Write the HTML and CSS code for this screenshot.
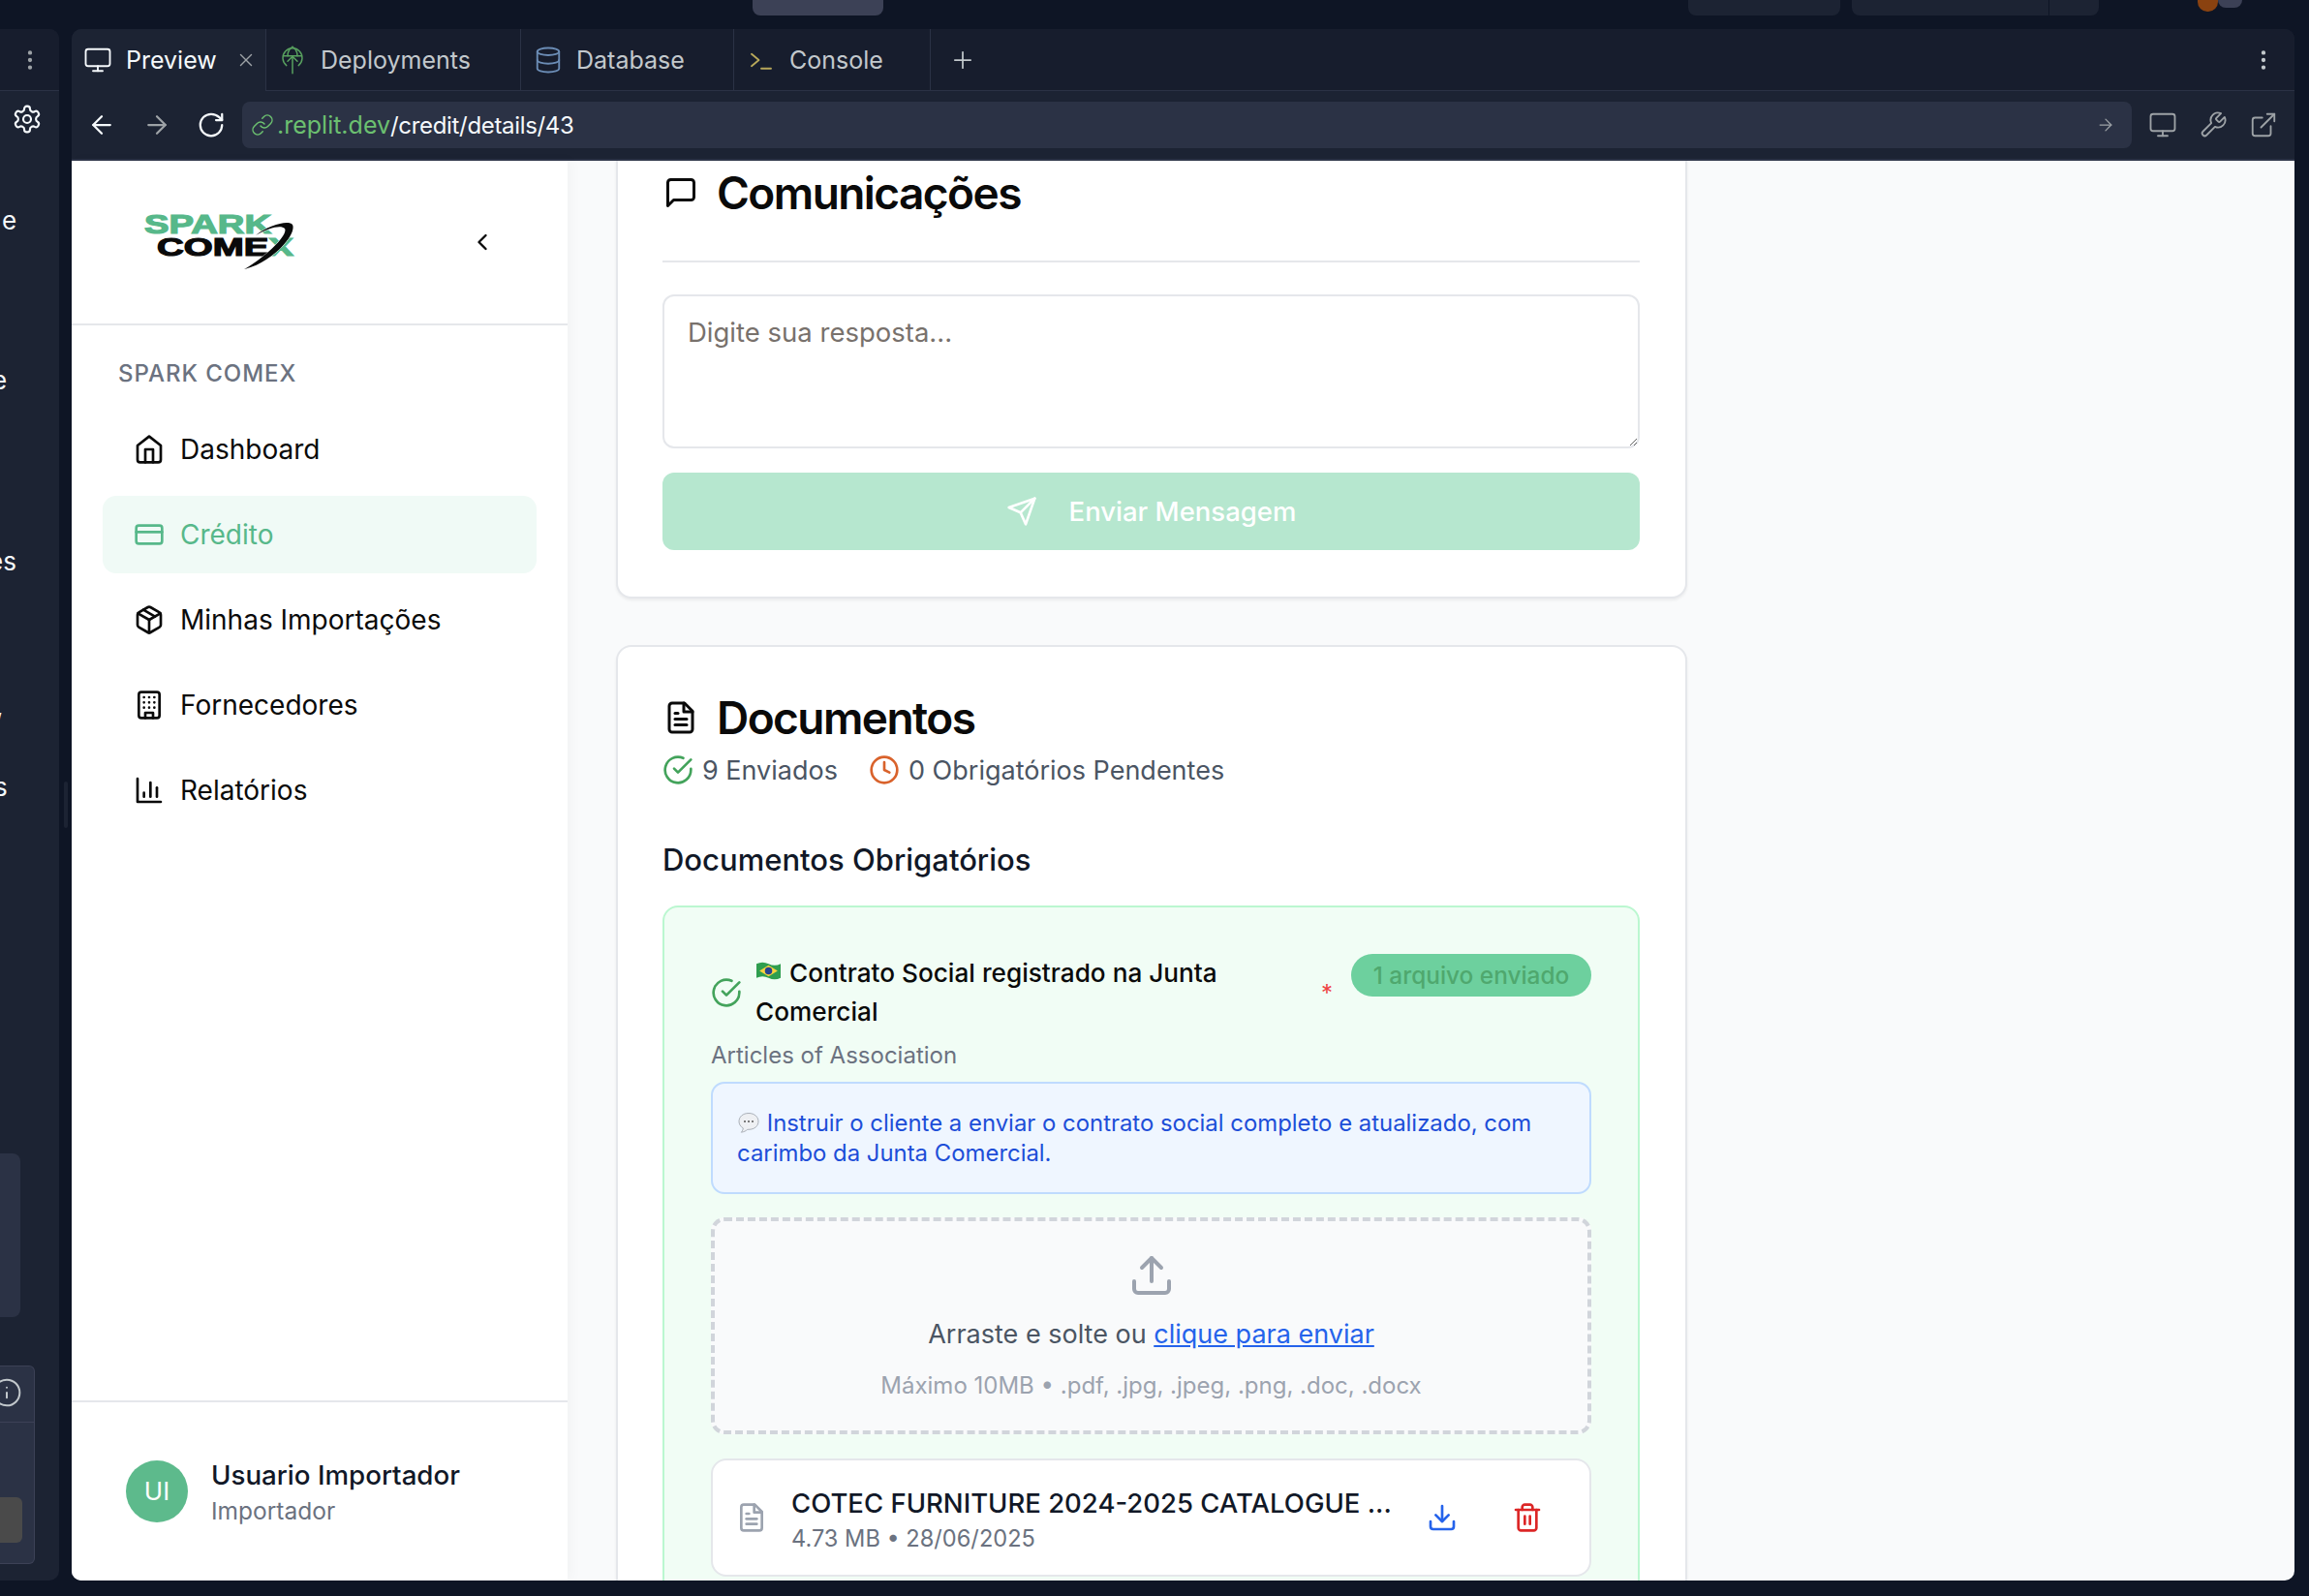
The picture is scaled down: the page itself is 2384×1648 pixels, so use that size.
FILE: index.html
```html
<!DOCTYPE html>
<html lang="pt-BR">
<head>
<meta charset="UTF-8">
<title>Spark Comex - Crédito</title>
<link rel="stylesheet" href="styles.css">
</head>
<body>
<!-- editor top strip -->
<header class="topstrip">
  <div class="pill pill-center"></div>
  <div class="pill pill-a"></div>
  <div class="pill pill-b"><span class="pill-split"></span></div>
  <div class="top-avatar"><span class="pin"></span><span class="face"></span></div>
</header>

<div class="workspace">
  <!-- left file rail, mostly cut off -->
  <aside class="rail">
    <div class="rail-head">
      <svg class="ic ic-dots" viewBox="0 0 24 24"><circle cx="12" cy="5" r="1"/><circle cx="12" cy="12" r="1"/><circle cx="12" cy="19" r="1"/></svg>
    </div>
    <div class="rail-body">
      <svg class="ic ic-gear" viewBox="0 0 24 24"><path d="M12.22 2h-.44a2 2 0 0 0-2 2v.18a2 2 0 0 1-1 1.73l-.43.25a2 2 0 0 1-2 0l-.15-.08a2 2 0 0 0-2.73.73l-.22.38a2 2 0 0 0 .73 2.73l.15.1a2 2 0 0 1 1 1.72v.51a2 2 0 0 1-1 1.74l-.15.09a2 2 0 0 0-.73 2.73l.22.38a2 2 0 0 0 2.73.73l.15-.08a2 2 0 0 1 2 0l.43.25a2 2 0 0 1 1 1.73V20a2 2 0 0 0 2 2h.44a2 2 0 0 0 2-2v-.18a2 2 0 0 1 1-1.73l.43-.25a2 2 0 0 1 2 0l.15.08a2 2 0 0 0 2.73-.73l.22-.39a2 2 0 0 0-.73-2.73l-.15-.08a2 2 0 0 1-1-1.74v-.5a2 2 0 0 1 1-1.74l.15-.09a2 2 0 0 0 .73-2.73l-.22-.38a2 2 0 0 0-2.73-.73l-.15.08a2 2 0 0 1-2 0l-.43-.25a2 2 0 0 1-1-1.73V4a2 2 0 0 0-2-2z"/><circle cx="12" cy="12" r="3"/></svg>
      <span class="frag frag-1">e</span>
      <span class="frag frag-2">e</span>
      <span class="frag frag-3">es</span>
      <span class="frag frag-4">,</span>
      <span class="frag frag-5">s</span>
      <div class="rail-box"></div>
      <div class="rail-panel">
        <div class="rail-panel-top">
          <svg class="ic ic-info" viewBox="0 0 24 24"><circle cx="12" cy="12" r="10"/><path d="M12 16v-4"/><path d="M12 8h.01"/></svg>
        </div>
        <div class="rail-panel-btn"></div>
      </div>
    </div>
  </aside>
  <div class="gutter"><span class="gutter-thumb"></span></div>

  <main class="pane">
    <nav class="tabs">
      <div class="tab tab-preview">
        <svg class="ic ic-tab light" viewBox="0 0 24 24"><rect x="2" y="3" width="20" height="14" rx="2"/><path d="M8 21h8"/><path d="M12 17v4"/></svg>
        <span class="tab-on">Preview</span>
        <svg class="ic ic-x" viewBox="0 0 24 24"><path d="M18 6 6 18"/><path d="m6 6 12 12"/></svg>
      </div>
      <div class="tab tab-deploy">
        <svg class="ic ic-tab ic-globe green" viewBox="0 0 24 24"><path d="M12 23V9"/><path d="m8 13 4-4 4 4"/><path d="M7 16.500a8 8 0 1 1 10 0"/><path d="M4.500 8.500h15"/><path d="M12 1c-3 2-4 4.500-4 7.500M12 1c3 2 4 4.500 4 7.500"/></svg>
        <span>Deployments</span>
      </div>
      <div class="tab tab-db">
        <svg class="ic ic-tab blue" viewBox="0 0 24 24"><ellipse cx="12" cy="5" rx="9" ry="3"/><path d="M3 5v14a9 3 0 0 0 18 0V5"/><path d="M3 12a9 3 0 0 0 18 0"/></svg>
        <span>Database</span>
      </div>
      <div class="tab tab-console">
        <svg class="ic ic-tab yellow" viewBox="0 0 24 24"><path d="m4 17 6-5-6-5"/><path d="M12 19h8"/></svg>
        <span>Console</span>
      </div>
      <svg class="ic ic-plus" viewBox="0 0 24 24"><path d="M5 12h14"/><path d="M12 5v14"/></svg>
      <svg class="ic ic-dots ic-dots-right" viewBox="0 0 24 24"><circle cx="12" cy="5" r="1"/><circle cx="12" cy="12" r="1"/><circle cx="12" cy="19" r="1"/></svg>
    </nav>

    <div class="urlrow">
      <svg class="ic ic-nav light" viewBox="0 0 24 24"><path d="M19 12H5"/><path d="m12 19-7-7 7-7"/></svg>
      <svg class="ic ic-nav dim" viewBox="0 0 24 24"><path d="M5 12h14"/><path d="m12 5 7 7-7 7"/></svg>
      <svg class="ic ic-nav light" viewBox="0 0 24 24"><path d="M21 12a9 9 0 1 1-9-9c2.520 0 4.930 1 6.740 2.740L21 8"/><path d="M21 3v5h-5"/></svg>
      <div class="urlbar">
        <svg class="ic ic-link" viewBox="0 0 24 24"><path d="M10 13a5 5 0 0 0 7.540.54l3-3a5 5 0 0 0-7.070-7.070l-1.720 1.710"/><path d="M14 11a5 5 0 0 0-7.540-.54l-3 3a5 5 0 0 0 7.070 7.070l1.710-1.710"/></svg>
        <span class="url-host">.replit.dev</span><span class="url-path">/credit/details/43</span>
        <svg class="ic ic-go" viewBox="0 0 24 24"><path d="M5 12h14"/><path d="m12 5 7 7-7 7"/></svg>
      </div>
      <svg class="ic ic-tool" viewBox="0 0 24 24"><rect x="2" y="3" width="20" height="14" rx="2"/><path d="M8 21h8"/><path d="M12 17v4"/></svg>
      <svg class="ic ic-tool" viewBox="0 0 24 24"><path d="M14.700 6.300a1 1 0 0 0 0 1.400l1.600 1.600a1 1 0 0 0 1.400 0l3.770-3.770a6 6 0 0 1-7.940 7.940l-6.910 6.910a2.120 2.120 0 0 1-3-3l6.910-6.910a6 6 0 0 1 7.940-7.940l-3.760 3.760z"/></svg>
      <svg class="ic ic-tool" viewBox="0 0 24 24"><path d="M18 13v6a2 2 0 0 1-2 2H5a2 2 0 0 1-2-2V8a2 2 0 0 1 2-2h6"/><path d="M15 3h6v6"/><path d="M10 14 21 3"/></svg>
    </div>

    <div class="app">
      <aside class="sidebar">
        <div class="side-head">
          <svg class="logo" viewBox="0 0 160 64" role="img" aria-label="Spark Comex">
            <text class="logo-spark" x="1" y="23" textLength="131" lengthAdjust="spacingAndGlyphs">SPARK</text>
            <text class="logo-comex" x="14" y="46" textLength="141" lengthAdjust="spacingAndGlyphs">COME<tspan class="logo-x">X</tspan></text>
            <path class="logo-swoosh" d="M116 25C130 14 150 9 154 14C159 24 132 54 104 60C126 48 150 24 146 18C142 14 130 17 116 25Z"/>
          </svg>
          <svg class="ic ic-chevron" viewBox="0 0 24 24"><path d="m15 18-6-6 6-6"/></svg>
        </div>
        <div class="side-nav">
          <p class="side-label">SPARK COMEX</p>
          <a class="nav-item">
            <svg class="ic ic-menu" viewBox="0 0 24 24"><path d="m3 9 9-7 9 7v11a2 2 0 0 1-2 2H5a2 2 0 0 1-2-2z"/><path d="M9 22V12h6v10"/></svg>
            Dashboard
          </a>
          <a class="nav-item active">
            <svg class="ic ic-menu" viewBox="0 0 24 24"><rect x="2" y="5" width="20" height="14" rx="2"/><path d="M2 10h20"/></svg>
            Crédito
          </a>
          <a class="nav-item">
            <svg class="ic ic-menu" viewBox="0 0 24 24"><path d="m7.500 4.270 9 5.150"/><path d="M21 8a2 2 0 0 0-1-1.730l-7-4a2 2 0 0 0-2 0l-7 4A2 2 0 0 0 3 8v8a2 2 0 0 0 1 1.730l7 4a2 2 0 0 0 2 0l7-4A2 2 0 0 0 21 16Z"/><path d="m3.300 7 8.700 5 8.700-5"/><path d="M12 22V12"/></svg>
            Minhas Importações
          </a>
          <a class="nav-item">
            <svg class="ic ic-menu" viewBox="0 0 24 24"><rect x="4" y="2" width="16" height="20" rx="2"/><path d="M9 22v-4h6v4"/><path d="M8 6h.01M16 6h.01M12 6h.01M12 10h.01M12 14h.01M16 10h.01M16 14h.01M8 10h.01M8 14h.01"/></svg>
            Fornecedores
          </a>
          <a class="nav-item">
            <svg class="ic ic-menu" viewBox="0 0 24 24"><path d="M3 3v18h18"/><path d="M8 17v-3"/><path d="M13 17V6"/><path d="M18 17v-7"/></svg>
            Relatórios
          </a>
        </div>
        <div class="side-foot">
          <div class="avatar">UI</div>
          <div class="user">
            <div class="user-name">Usuario Importador</div>
            <div class="user-role">Importador</div>
          </div>
        </div>
      </aside>

      <section class="scroll">
        <div class="card card-chat">
          <h2 class="card-title chat-title">
            <svg class="ic ic-title" viewBox="0 0 24 24"><path d="M21 15a2 2 0 0 1-2 2H7l-4 4V5a2 2 0 0 1 2-2h14a2 2 0 0 1 2 2z"/></svg>
            Comunicações
          </h2>
          <textarea class="reply" placeholder="Digite sua resposta..."></textarea>
          <button class="send" type="button">
            <svg class="ic ic-send" viewBox="0 0 24 24"><path d="m22 2-7 20-4-9-9-4Z"/><path d="M22 2 11 13"/></svg>
            Enviar Mensagem
          </button>
        </div>

        <div class="card card-docs">
          <h2 class="card-title docs-title">
            <svg class="ic ic-title" viewBox="0 0 24 24"><path d="M14.500 2H6a2 2 0 0 0-2 2v16a2 2 0 0 0 2 2h12a2 2 0 0 0 2-2V7.500L14.500 2z"/><path d="M14 2v6h6"/><path d="M16 13H8"/><path d="M16 17H8"/><path d="M10 9H8"/></svg>
            Documentos
          </h2>
          <div class="stats">
            <span class="stat">
              <svg class="ic ic-stat ok" viewBox="0 0 24 24"><path d="M22 11.080V12a10 10 0 1 1-5.930-9.140"/><path d="M22 4 12 14.010l-3-3"/></svg>
              9 Enviados
            </span>
            <span class="stat">
              <svg class="ic ic-stat warn" viewBox="0 0 24 24"><circle cx="12" cy="12" r="10"/><path d="M12 6v6l4 2"/></svg>
              0 Obrigatórios Pendentes
            </span>
          </div>
          <h3 class="sub-title">Documentos Obrigatórios</h3>

          <div class="doc-box">
            <div class="doc-head">
              <svg class="ic ic-stat ok" viewBox="0 0 24 24"><path d="M22 11.080V12a10 10 0 1 1-5.930-9.140"/><path d="M22 4 12 14.010l-3-3"/></svg>
              <div class="doc-name">
                <svg class="flag" viewBox="0 0 24 18"><path fill="#2f9e4f" d="M0 2q6-3 12 0t12 0v14q-6 3-12 0t-12 0z"/><path fill="#f7d23e" d="M12 3.500 21 9l-9 5.500L3 9z"/><circle cx="12" cy="9" r="3.600" fill="#26418f"/></svg>
                Contrato Social registrado na Junta Comercial
              </div>
              <span class="req">*</span>
              <span class="badge">1 arquivo enviado</span>
            </div>
            <p class="doc-en">Articles of Association</p>
            <div class="doc-note">
              <svg class="bubble" viewBox="0 0 24 24"><path fill="#eef0f3" stroke="#aab0b8" d="M12 2C6 2 2 5.600 2 10.500c0 3 1.700 5.400 4.300 6.900-.1 1.600-.8 3-2 4.300 2.700-.4 4.900-1.400 6.500-2.900h1.200c6 0 10-3.600 10-8.300S18 2 12 2z"/><circle cx="8" cy="10.500" r="1" fill="#555"/><circle cx="12" cy="10.500" r="1" fill="#555"/><circle cx="16" cy="10.500" r="1" fill="#555"/></svg>
              Instruir o cliente a enviar o contrato social completo e atualizado, com carimbo da Junta Comercial.
            </div>
            <div class="drop">
              <svg class="ic ic-upload" viewBox="0 0 24 24"><path d="M21 15v4a2 2 0 0 1-2 2H5a2 2 0 0 1-2-2v-4"/><path d="m17 8-5-5-5 5"/><path d="M12 3v12"/></svg>
              <p class="drop-text">Arraste e solte ou <a class="drop-link">clique para enviar</a></p>
              <p class="drop-hint">Máximo 10MB • .pdf, .jpg, .jpeg, .png, .doc, .docx</p>
            </div>
            <div class="file">
              <svg class="ic ic-file" viewBox="0 0 24 24"><path d="M14.500 2H6a2 2 0 0 0-2 2v16a2 2 0 0 0 2 2h12a2 2 0 0 0 2-2V7.500L14.500 2z"/><path d="M14 2v6h6"/><path d="M16 13H8"/><path d="M16 17H8"/><path d="M10 9H8"/></svg>
              <div class="file-info">
                <div class="file-name">COTEC FURNITURE 2024-2025 CATALOGUE ...</div>
                <div class="file-meta">4.73 MB • 28/06/2025</div>
              </div>
              <svg class="ic ic-act act-dl" viewBox="0 0 24 24"><path d="M21 15v4a2 2 0 0 1-2 2H5a2 2 0 0 1-2-2v-4"/><path d="m7 10 5 5 5-5"/><path d="M12 15V3"/></svg>
              <svg class="ic ic-act act-del" viewBox="0 0 24 24"><path d="M3 6h18"/><path d="M19 6v14c0 1-1 2-2 2H7c-1 0-2-1-2-2V6"/><path d="M8 6V4c0-1 1-2 2-2h4c1 0 2 1 2 2v2"/><path d="M10 11v6"/><path d="M14 11v6"/></svg>
            </div>
          </div>
        </div>
      </section>
    </div>
  </main>
</div>
</body>
</html>
```

FILE: styles.css
```css
/* Editor frame */
html, body {
  margin: 0;
  height: 100%;
  overflow: hidden;
  background-color: #0e1525;
  font-family: Inter, "Noto Sans", sans-serif;
}
p, h2, h3 {
  margin: 0;
}
.ic {
  display: block;
  flex: none;
  fill: none;
  stroke: currentColor;
  stroke-width: 2;
  stroke-linecap: round;
  stroke-linejoin: round;
}
.light { color: #f5f9fc; }
.dim { color: #9da2a6; }
.green { color: #58a05f; }
.blue { color: #6b8cb5; }
.yellow { color: #b8a85a; }

/* Top strip */
.topstrip {
  display: flex;
  height: 30px;
}
.pill {
  height: 16px;
  border-radius: 0 0 8px 8px;
  background-color: #1c2333;
}
.pill-center {
  width: 135px;
  margin-left: 777px;
  background-color: #3c4156;
}
.pill-a {
  width: 157px;
  margin-left: 831px;
}
.pill-b {
  width: 255px;
  margin-left: 12px;
  padding-left: 203px;
  box-sizing: border-box;
}
.pill-split {
  display: block;
  width: 1px;
  height: 16px;
  background-color: #0e1525;
}
.top-avatar {
  display: flex;
  margin-left: 102px;
}
.pin {
  width: 21px;
  height: 12px;
  border-radius: 0 0 10px 10px;
  background-color: #8a4210;
}
.face {
  width: 25px;
  height: 8px;
  border-radius: 0 0 12px 12px;
  background-color: #3c4156;
}

.workspace {
  display: flex;
  height: 1602px;
  padding-right: 15px;
}

/* Left rail */
.rail {
  width: 61px;
  height: 1602px;
  flex: none;
  overflow: hidden;
  background-color: #1c2333;
  border-radius: 0 10px 10px 0;
}
.rail-head {
  display: flex;
  align-items: center;
  justify-content: flex-end;
  height: 63px;
  padding-right: 17px;
  background-color: #171d2d;
  border-bottom: 1px solid #2b3245;
  color: #9da2a6;
}
.ic-dots {
  width: 26px;
  height: 26px;
  fill: currentColor;
}
.rail-body {
  display: flex;
  flex-direction: column;
  align-items: flex-start;
  padding-top: 13px;
}
.ic-gear {
  width: 32px;
  height: 32px;
  margin-left: 12px;
  color: #f5f9fc;
  stroke-width: 1.600;
}
.frag {
  height: 40px;
  font-size: 26px;
  line-height: 40px;
  color: #f5f9fc;
}
.frag-1 { margin-top: 69px; margin-left: 2px; }
.frag-2 { margin-top: 125px; margin-left: -8px; }
.frag-3 { margin-top: 147px; margin-left: -12px; }
.frag-4 { margin-top: 110px; margin-left: -4px; }
.frag-5 { margin-top: 43px; margin-left: -6px; }
.rail-box {
  width: 21px;
  height: 169px;
  margin-top: 358px;
  border-radius: 0 8px 8px 0;
  background-color: #2b3245;
}
.rail-panel {
  width: 35px;
  height: 203px;
  margin-top: 50px;
  border: 1px solid #3c4156;
  border-left: none;
  border-radius: 0 6px 6px 0;
  background-color: #2b3245;
}
.rail-panel-top {
  height: 58px;
  border-bottom: 1px solid #3c4156;
  color: #c2c8cc;
  overflow: hidden;
  padding-top: 11px;
  box-sizing: border-box;
}
.ic-info {
  width: 32px;
  height: 32px;
  margin-left: -9px;
  stroke-width: 1.500;
}
.rail-panel-btn {
  width: 23px;
  height: 47px;
  margin-top: 77px;
  border-radius: 0 6px 6px 0;
  background-color: #4a4a4a;
}
.gutter {
  width: 13px;
  flex: none;
  padding-top: 777px;
}
.gutter-thumb {
  display: block;
  width: 4px;
  height: 48px;
  margin-left: 5px;
  border-radius: 2px;
  background-color: #1c2333;
}

/* Preview pane */
.pane {
  flex: 1;
  display: flex;
  flex-direction: column;
  min-width: 0;
  height: 1602px;
  overflow: hidden;
  border-radius: 10px;
  background-color: #1c2333;
}
.tabs {
  display: flex;
  align-items: center;
  flex: none;
  height: 63px;
  background-color: #171d2d;
  border-bottom: 1px solid #2b3245;
  color: #c2c8cc;
  font-size: 25px;
  font-weight: 400;
}
.tab {
  display: flex;
  align-items: center;
  height: 63px;
  box-sizing: border-box;
  border-right: 1px solid #2b3245;
}
.tab-preview {
  align-self: flex-start;
  width: 201px;
  height: 64px;
  margin-bottom: -1px;
  padding-left: 12px;
  background-color: #1c2333;
  color: #f5f9fc;
}
.tab-deploy {
  width: 263px;
  padding-left: 12px;
}
.tab-db {
  width: 220px;
  padding-left: 13px;
}
.tab-console {
  width: 203px;
  padding-left: 13px;
}
.ic-tab {
  width: 30px;
  height: 30px;
  margin-right: 14px;
  stroke-width: 1.500;
}
.ic-globe {
  stroke-width: 1.200;
}
.tab-on {
  flex: 1;
}
.ic-x {
  width: 22px;
  height: 22px;
  margin-right: 9px;
  color: #9da2a6;
  stroke-width: 1.500;
}
.ic-plus {
  width: 28px;
  height: 28px;
  margin-left: 19px;
  stroke-width: 1.500;
}
.ic-dots-right {
  margin-left: auto;
  margin-right: 19px;
}
.urlrow {
  display: flex;
  align-items: center;
  flex: none;
  height: 72px;
  padding-left: 16px;
  border-bottom: 2px solid #2b3245;
  box-sizing: border-box;
  color: #c2c8cc;
}
.ic-nav {
  width: 30px;
  height: 30px;
  margin-right: 26.500px;
  stroke-width: 1.800;
}
.ic-nav + .urlbar {
  margin-left: -9.500px;
}
.urlbar {
  display: flex;
  align-items: center;
  width: 1951px;
  height: 48px;
  flex: none;
  margin-right: 17px;
  padding-left: 9px;
  box-sizing: border-box;
  border-radius: 8px;
  background-color: #2b3245;
  font-size: 25px;
  color: #f5f9fc;
}
.ic-link {
  width: 24px;
  height: 24px;
  margin-right: 3px;
  color: #6cc070;
  stroke-width: 1.500;
}
.url-host { color: #6cc070; }
.url-path {
  font-size: 24px;
  letter-spacing: -0.33px;
}
.ic-go {
  width: 20px;
  height: 20px;
  margin-left: auto;
  margin-right: 17px;
  color: #9da2a6;
  stroke-width: 1.500;
}
.ic-tool {
  width: 30px;
  height: 30px;
  margin-right: 22px;
  color: #9da2a6;
  stroke-width: 1.500;
}

/* App inside the preview */
.app {
  flex: 1;
  display: flex;
  min-height: 0;
  background-color: #f9fafb;
}
.sidebar {
  display: flex;
  flex-direction: column;
  width: 512px;
  flex: none;
  background-color: #fff;
  box-shadow: 4px 0 12px rgba(0, 0, 0, 0.03);
  color: #0a0a0a;
}
.side-head {
  display: flex;
  align-items: center;
  justify-content: space-between;
  height: 170px;
  flex: none;
  padding: 0 74px 0 74px;
  box-sizing: border-box;
  border-bottom: 2px solid #e5e7eb;
}
.logo {
  width: 160px;
  height: 64px;
  flex: none;
}
.logo-spark {
  font-family: "Liberation Sans", Arial, sans-serif;
  font-size: 27px;
  font-weight: 700;
  fill: #57b88a;
  stroke: #57b88a;
  stroke-width: 1.200;
}
.logo-comex {
  font-family: "Liberation Sans", Arial, sans-serif;
  font-size: 26px;
  font-weight: 700;
  fill: #0a0a0a;
  stroke: #0a0a0a;
  stroke-width: 1.200;
}
.logo-comex .logo-x {
  fill: #57b88a;
  stroke: #57b88a;
}
.logo-swoosh {
  fill: #0a0a0a;
  stroke: #fff;
  stroke-width: 1;
  paint-order: stroke;
}
.ic-chevron {
  width: 28px;
  height: 28px;
}
.side-nav {
  flex: 1;
  padding: 0 32px;
}
.side-label {
  margin-top: 36px;
  margin-bottom: 24px;
  padding-left: 16px;
  font-size: 24px;
  line-height: 28px;
  font-weight: 500;
  letter-spacing: 0.04em;
  color: #6b7280;
}
.nav-item {
  display: flex;
  align-items: center;
  height: 80px;
  margin-bottom: 8px;
  padding-left: 32px;
  border-radius: 14px;
  font-size: 28px;
  font-weight: 400;
}
.nav-item.active {
  background-color: #f0faf6;
  color: #57b88a;
}
.ic-menu {
  width: 32px;
  height: 32px;
  margin-right: 16px;
}
.side-foot {
  display: flex;
  align-items: center;
  height: 186px;
  flex: none;
  padding-left: 56px;
  box-sizing: border-box;
  border-top: 2px solid #e5e7eb;
}
.avatar {
  width: 64px;
  height: 64px;
  margin-right: 24px;
  border-radius: 50%;
  background-color: #5dba8c;
  color: #fff;
  font-size: 26px;
  line-height: 64px;
  text-align: center;
}
.user {
  padding-top: 5px;
}
.user-name {
  font-size: 27.700px;
  line-height: 36px;
  font-weight: 500;
  color: #111827;
}
.user-role {
  font-size: 24.500px;
  line-height: 39px;
  color: #6b7280;
}

/* Cards */
.scroll {
  flex: 1;
  min-width: 0;
  padding-left: 50px;
  overflow: hidden;
}
.card {
  width: 1106px;
  padding: 48px 47px 48px 46px;
  box-sizing: border-box;
  border: 2px solid #e5e7eb;
  border-radius: 16px;
  background-color: #fff;
  box-shadow: 0 2px 3px rgba(0, 0, 0, 0.06);
}
.card-chat {
  margin-top: -42px;
  margin-bottom: 48px;
}
.card-title {
  display: flex;
  align-items: center;
  height: 52px;
  font-size: 46px;
  line-height: 52px;
  font-weight: 600;
  letter-spacing: -0.034em;
  color: #0a0a0a;
}
.chat-title {
  height: 97px;
  padding-bottom: 45px;
  box-sizing: border-box;
  border-bottom: 2px solid #e5e7eb;
}
.docs-title {
  margin-top: -1px;
  margin-bottom: 1px;
}
.ic-title {
  width: 36px;
  height: 36px;
  margin-right: 19px;
  margin-left: 1px;
}
.reply {
  display: block;
  width: 100%;
  height: 159px;
  margin-top: 33px;
  padding: 19px 24px;
  box-sizing: border-box;
  border: 2px solid #e5e7eb;
  border-radius: 12px;
  font-family: inherit;
  font-size: 27.500px;
  line-height: 36px;
  outline: none;
}
.reply::placeholder {
  color: #78716c;
}
.send {
  display: flex;
  align-items: center;
  justify-content: center;
  width: 100%;
  height: 80px;
  margin-top: 25px;
  border: none;
  border-radius: 12px;
  background-color: #b6e7cf;
  color: #fff;
  font-family: inherit;
  font-size: 27.500px;
  font-weight: 500;
}
.ic-send {
  width: 32px;
  height: 32px;
  margin-right: 33px;
}
.stats {
  display: flex;
  align-items: center;
  gap: 32px;
  height: 40px;
  margin-top: 8px;
  font-size: 27px;
  color: #4b5563;
}
.stat {
  display: flex;
  align-items: center;
  gap: 9px;
}
.ic-stat {
  width: 32px;
  height: 32px;
}
.ok { color: #43a35b; }
.warn { color: #d9622b; }
.sub-title {
  margin-top: 53px;
  font-size: 31px;
  line-height: 40px;
  font-weight: 500;
  color: #111827;
}

/* Required document box */
.doc-box {
  margin-top: 27px;
  padding: 48px;
  border: 2px solid #bbf7d0;
  border-radius: 16px;
  background-color: #f1fdf5;
}
.doc-head {
  display: flex;
  align-items: center;
}
.doc-name {
  width: 572px;
  margin-left: 14px;
  font-size: 26.200px;
  line-height: 40px;
  font-weight: 500;
  color: #0a0a0a;
}
.flag {
  display: inline-block;
  width: 25px;
  height: 19px;
  margin-left: 1px;
  margin-right: 2px;
  vertical-align: 2px;
}
.req {
  margin-left: 12px;
  font-size: 24px;
  color: #ef4444;
}
.badge {
  align-self: flex-start;
  width: 248px;
  height: 44px;
  margin-left: auto;
  border-radius: 22px;
  background-color: #6dd09e;
  color: #4fa86e;
  font-size: 24.400px;
  line-height: 44px;
  font-weight: 500;
  text-align: center;
}
.doc-en {
  margin-top: 5px;
  font-size: 24px;
  line-height: 40px;
  color: #6b7280;
}
.doc-note {
  margin-top: 7px;
  padding: 25px;
  border: 2px solid #bfdbfe;
  border-radius: 14px;
  background-color: #eff6ff;
  color: #1d4ed8;
  font-size: 23.900px;
  line-height: 31px;
}
.bubble {
  display: inline-block;
  width: 24px;
  height: 25px;
  vertical-align: -4px;
}
.drop {
  display: flex;
  flex-direction: column;
  align-items: center;
  height: 224px;
  margin-top: 24px;
  box-sizing: border-box;
  padding-top: 32px;
  border: 4px dashed #d1d5db;
  border-radius: 14px;
  background-color: #f9fafb;
}
.ic-upload {
  width: 48px;
  height: 48px;
  color: #9ca3af;
}
.drop-text {
  margin-top: 19px;
  font-size: 27px;
  line-height: 36px;
  color: #4b5563;
}
.drop-link {
  color: #2563eb;
  text-decoration: underline;
}
.drop-hint {
  margin-top: 19px;
  font-size: 24px;
  line-height: 32px;
  color: #9ca3af;
}
.file {
  display: flex;
  align-items: center;
  height: 122px;
  margin-top: 25px;
  padding-left: 24px;
  box-sizing: border-box;
  border: 2px solid #e5e7eb;
  border-radius: 16px;
  background-color: #fff;
}
.ic-file {
  width: 32px;
  height: 32px;
  margin-right: 25px;
  color: #9ca3af;
}
.file-info {
  width: 649px;
  padding-top: 5px;
}
.file-name {
  font-size: 27.500px;
  line-height: 38px;
  font-weight: 500;
  color: #111827;
  white-space: nowrap;
}
.file-meta {
  font-size: 23.600px;
  line-height: 36px;
  color: #6b7280;
}
.ic-act {
  width: 32px;
  height: 32px;
}
.act-dl {
  color: #2563eb;
  margin-left: 7px;
}
.act-del {
  color: #dc2626;
  margin-left: 56px;
}
```
